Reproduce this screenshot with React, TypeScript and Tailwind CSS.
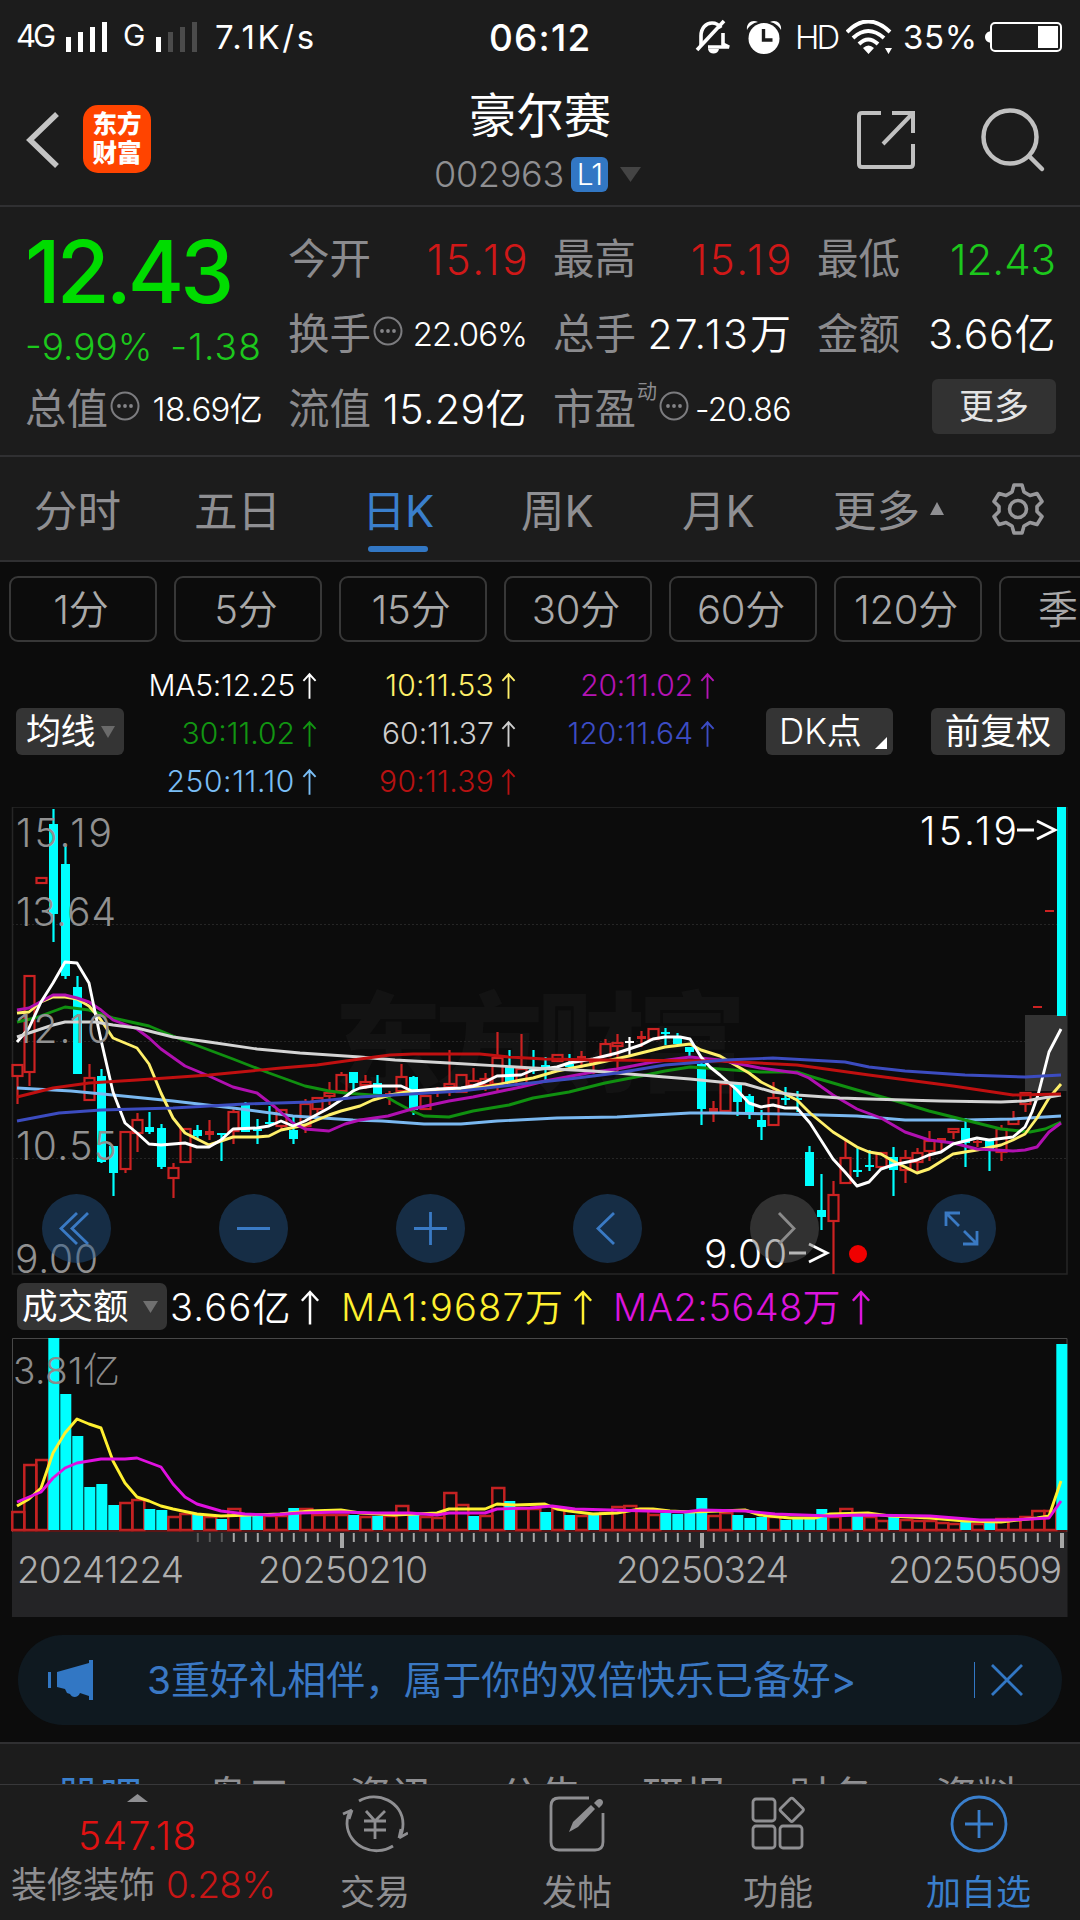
import { clsx } from 'clsx';
import type { ReactNode } from 'react';

type Tone = 'up' | 'down' | 'flat';

// tone, high, body top, body bottom, low
type Candle = [Tone, number, number, number, number];

const CANDLES: Candle[] = [
  ['up', 257, 257, 270, 297], ['up', 168, 168, 266, 279], ['up', 70, 70, 77, 77], ['down', 2, 17, 107, 135],
  ['down', 39, 57, 169, 172], ['down', 169, 180, 267, 267], ['up', 257, 270, 294, 294], ['down', 262, 269, 355, 356],
  ['down', 339, 339, 366, 389], ['up', 324, 324, 363, 366], ['up', 306, 312, 327, 345], ['down', 305, 320, 325, 327],
  ['down', 317, 321, 360, 362], ['up', 356, 360, 372, 391], ['up', 321, 321, 356, 356], ['down', 318, 323, 329, 332],
  ['up', 313, 324, 328, 333], ['down', 326, 326, 328, 354], ['up', 300, 304, 325, 337], ['down', 295, 297, 325, 325],
  ['down', 312, 322, 324, 337], ['down', 299, 315, 317, 318], ['up', 302, 302, 320, 323], ['down', 310, 323, 332, 337],
  ['up', 292, 296, 320, 326], ['up', 290, 290, 303, 308], ['up', 275, 285, 290, 298], ['up', 265, 267, 285, 285],
  ['down', 265, 265, 276, 285], ['up', 268, 274, 279, 282], ['down', 268, 276, 287, 287], ['up', 284, 286, 288, 298],
  ['up', 257, 269, 285, 285], ['down', 269, 270, 303, 308], ['up', 288, 288, 303, 303], ['up', 280, 282, 284, 290],
  ['up', 243, 276, 281, 289], ['up', 267, 267, 286, 286], ['up', 261, 273, 279, 279], ['up', 266, 271, 279, 284],
  ['up', 225, 250, 278, 286], ['down', 243, 259, 276, 276], ['up', 227, 261, 278, 278], ['down', 243, 261, 263, 267],
  ['down', 250, 258, 260, 274], ['up', 247, 247, 255, 255], ['down', 247, 257, 260, 261], ['up', 244, 249, 252, 261],
  ['up', 253, 253, 256, 267], ['up', 232, 236, 250, 250], ['up', 227, 235, 240, 266], ['flat', 230, 234, 236, 249],
  ['up', 224, 229, 232, 240], ['up', 221, 221, 233, 233], ['down', 221, 225, 227, 238], ['down', 226, 229, 237, 237],
  ['down', 240, 240, 245, 249], ['down', 255, 257, 302, 318], ['up', 294, 301, 305, 315], ['up', 276, 276, 305, 305],
  ['down', 277, 277, 295, 309], ['down', 287, 289, 306, 312], ['down', 303, 313, 320, 333], ['up', 275, 290, 319, 319],
  ['down', 280, 291, 293, 298], ['down', 284, 291, 293, 305], ['down', 339, 345, 379, 379], ['down', 367, 403, 410, 423],
  ['up', 374, 387, 415, 467], ['up', 333, 350, 377, 377], ['down', 340, 363, 365, 370], ['down', 343, 358, 360, 364],
  ['up', 345, 345, 361, 361], ['down', 340, 350, 363, 389], ['up', 343, 350, 364, 376], ['up', 341, 345, 356, 364],
  ['up', 324, 333, 345, 354], ['up', 331, 331, 335, 345], ['up', 321, 321, 326, 332], ['down', 311, 321, 336, 360],
  ['up', 333, 334, 336, 340], ['down', 334, 334, 343, 364], ['up', 318, 321, 346, 354], ['up', 304, 311, 318, 318],
  ['up', 285, 285, 298, 305], ['up', 199, 199, 201, 201], ['up', 103, 103, 105, 105], ['down', 0, 0, 209, 209],
];

// bar heights, negative on falling days
const VOLUMES = [
  19, 66, 71, -193, -136, -94, -43, -46, -25, 28, 31, -21, -20, 14, 17, -16, 14, -11, 22, -15, -15, 15, 15, -22, 22, 16,
  16, 16, -15, 14, -14, 15, 25, -17, 14, 13, 38, 26, -14, 15, 43, -29, 22, 22, -18, 22, -15, 15, -15, 18, 24, 25, 22, 16,
  -17, -16, -18, -32, 15, 18, -15, -12, -13, 14, -10, -12, -13, -21, 14, 22, -14, 14, 10, -14, 11, 10, 10, 8, 7, -9, 7,
  -9, 12, 12, 14, 20, 20, -186,
];

const LINES = [
  { stroke: '#7ab8f0', points: '17,281 71,284 113,288 173,294 233,301 293,309 353,313 382,314 424,317 461,317 497,314 557,311 617,310 690,306 720,306 785,307 857,309 905,313 965,313 1013,312 1061,309' },
  { stroke: '#109010', points: '17,215 35,211 65,200 89,203 113,211 149,219 185,234 233,252 269,266 305,279 329,284 345,286 385,289 397,296 412,304 424,309 449,310 473,304 509,298 533,291 569,285 605,276 641,269 665,264 690,260 720,262 760,265 797,265 809,269 833,276 857,283 893,293 929,304 965,313 1001,322 1030,325 1045,322 1061,315' },
  { stroke: '#fff06a', points: '17,206 29,205 41,195 53,190 65,190 77,192 89,199 101,213 113,231 137,241 149,257 161,286 173,311 185,326 197,332 209,338 221,334 233,330 257,330 269,329 281,323 305,318 329,308 341,304 360,299 373,293 390,288 412,284 437,283 485,280 521,273 533,271 557,264 593,257 629,249 665,240 690,237 701,243 720,249 730,255 749,266 761,275 785,287 797,293 810,306 833,325 857,340 869,345 881,347 893,354 905,360 917,366 929,362 953,347 977,343 1001,338 1013,333 1025,327 1037,311 1049,291 1061,277' },
  { stroke: '#b010b0', points: '17,203 29,201 53,188 65,188 77,191 89,195 101,203 113,213 137,222 149,231 161,242 185,259 209,269 233,280 257,286 275,300 293,316 305,322 329,324 345,317 360,313 388,309 412,302 449,294 473,290 497,285 521,280 545,274 593,265 617,262 653,255 690,250 720,253 760,261 797,266 809,271 833,288 857,302 881,311 905,325 929,333 953,336 977,342 1013,344 1025,343 1037,340 1049,325 1061,316' },
  { stroke: '#fff', points: '17,235 29,221 41,195 53,176 65,155 77,156 89,176 95,205 101,233 113,285 125,316 137,326 149,337 161,338 185,336 197,340 209,340 221,333 233,322 257,321 269,319 281,314 293,319 305,314 329,301 341,293 353,284 360,281 373,279 401,279 412,284 437,282 461,281 473,279 485,275 497,269 521,268 533,263 557,260 569,256 593,252 617,246 629,242 641,238 653,232 665,230 680,230 690,232 701,250 710,260 720,268 737,283 749,296 761,300 773,298 785,301 797,301 810,316 833,352 845,365 857,379 869,375 881,362 893,358 917,353 929,348 941,345 953,337 977,331 989,333 1013,330 1025,320 1032,305 1038,288 1049,245 1061,222' },
  { stroke: '#d4d4d4', points: '17,230 29,226 53,218 65,215 95,215 113,218 137,221 173,230 209,235 257,242 300,246 360,250 395,253 449,256 533,261 593,264 629,267 665,270 690,272 720,275 745,277 773,285 797,288 840,291 869,292 940,294 1001,295 1025,294 1061,288' },
  { stroke: '#c01010', points: '17,290 53,281 89,276 137,273 209,268 281,261 317,258 360,252 390,248 413,247 480,247 509,250 545,252 600,253 720,254 797,258 869,268 953,279 1013,288 1061,287' },
  { stroke: '#3c4cc0', points: '17,314 59,306 101,303 173,301 245,297 310,295 360,290 461,284 521,277 569,272 617,266 665,258 690,256 725,253 773,251 809,253 845,255 869,260 905,264 965,268 1025,270 1061,268' },
];

const VOLUME_LINES = [
  { stroke: '#fff030', points: '17,168 29,161 41,150 53,115 65,95 77,81 89,86 101,90 113,123 125,145 137,159 149,163 161,168 173,171 197,176 221,178 250,177 280,176 310,173 341,172 360,175 395,177 437,175 449,171 485,171 497,166 515,167 545,166 557,171 569,173 593,176 617,175 640,171 653,171 670,173 690,174 720,173 745,172 760,177 790,180 815,180 830,176 868,175 890,178 930,180 965,183 1001,184 1037,180 1049,178 1061,143' },
  { stroke: '#e010e0', points: '17,164 41,154 53,140 65,130 77,125 101,121 125,121 137,120 161,129 173,146 185,159 197,166 221,173 245,176 270,177 300,175 341,174 375,175 410,175 437,177 449,175 485,175 497,171 530,170 552,168 575,171 610,172 685,174 701,172 745,173 775,176 830,178 860,177 930,178 980,182 1010,182 1049,180 1061,163' },
];

const candleX = (i: number) => 17.5 + i * 12;

function Dots() {
  return (
    <svg className="w-[30px] h-[30px] shrink-0" viewBox="0 0 30 30" fill="#858588">
      <circle cx="15" cy="15" r="13.5" fill="none" stroke="#7c7c7f" strokeWidth="2" />
      <circle cx="9" cy="15" r="1.9" />
      <circle cx="15" cy="15" r="1.9" />
      <circle cx="21" cy="15" r="1.9" />
    </svg>
  );
}

function StatusBar() {
  return (
    <div className="flex items-center h-[74px] text-white">
      <span className="ml-[16px] w-[50px] text-[31px] leading-none tracking-[-3px] -mt-1">4G</span>
      <svg className="w-[44px] h-[30px] shrink-0" viewBox="0 0 44 30" fill="#fff">
        <rect x="0" y="15" width="5" height="15" />
        <rect x="12" y="10" width="5" height="20" />
        <rect x="24" y="5" width="5" height="25" />
        <rect x="36" y="0" width="5" height="30" />
      </svg>
      <span className="ml-[13px] w-[33px] text-[30px] leading-none tracking-[-2.5px] -mt-1">G</span>
      <svg className="w-[44px] h-[30px] shrink-0" viewBox="0 0 44 30" fill="#4b4b4b">
        <rect x="0" y="15" width="5" height="15" fill="#fff" />
        <rect x="12" y="10" width="5" height="20" />
        <rect x="24" y="5" width="5" height="25" />
        <rect x="36" y="0" width="5" height="30" />
      </svg>
      <span className="ml-[15px] w-[274px] text-[33px] leading-none tracking-[2.6px]">7.1K/s</span>
      <span className="w-[206px] text-[37px] leading-none font-[450] tracking-[1.2px]">06:12</span>
      <svg className="w-[36px] h-[36px] shrink-0" viewBox="0 0 36 36" fill="none" stroke="#fff">
        <path d="M6 27V17C6 9 11 4 17 4c4 0 7 2 9 5M28 14v11l6 3H13" strokeWidth="3.6" />
        <path d="M2 31 29 2" strokeWidth="3.6" />
        <path d="M13 30h11c-1 6-10 6-11 0z" fill="#fff" stroke="none" />
      </svg>
      <svg className="ml-[15px] w-[36px] h-[36px] shrink-0" viewBox="0 0 36 36" fill="#fff">
        <circle cx="18" cy="19.5" r="15.5" />
        <path d="M1 11C0 4 6 0 12 3 7 4 3 7 1 11zM35 11C36 4 30 0 24 3c5 1 9 4 11 8z" />
        <path d="M17.5 10v11h9" fill="none" stroke="#1c1c1c" strokeWidth="3.4" />
      </svg>
      <span className="ml-[13px] w-[51px] text-[33px] leading-none font-[350] tracking-[-3px]">HD</span>
      <svg className="w-[46px] h-[34px] shrink-0" viewBox="0 0 46 34" fill="none" stroke="#fff" strokeWidth="4">
        <path d="M1 12Q22-9 44 12" />
        <path d="M7 18Q22 4 38 18" />
        <path d="M13 24Q22 15 32 24" />
        <path d="M17 28q5.500-5 11 0l-5.500 6zM39 28h7l-3.500 6z" fill="#fff" stroke="none" />
      </svg>
      <span className="ml-[11px] w-[80px] text-[33px] leading-none tracking-[0.6px]">35%</span>
      <svg className="w-[80px] h-[32px] shrink-0" viewBox="0 0 80 32">
        <path d="M8 10v12C3 21 2 18 2 16s1-5 6-6z" fill="#fff" />
        <rect x="8" y="2" width="70" height="28" rx="4" fill="none" stroke="#fff" strokeWidth="2" />
        <rect x="55" y="5" width="20" height="22" fill="#fff" />
      </svg>
    </div>
  );
}

function Header() {
  return (
    <header className="flex h-[133px] border-b-2 border-[#303032]">
      <svg className="ml-[26px] mt-[38px] w-[34px] h-[56px] shrink-0" viewBox="0 0 34 56" fill="none" stroke="#c4c4c4" strokeWidth="5.500">
        <path d="M31 2 4 28l27 26" />
      </svg>
      <div className="ml-[23px] mt-[31px] w-[68px] h-[68px] shrink-0 rounded-[15px] bg-[#ff4400] text-white text-[24.5px] leading-[29px] font-black text-center pt-[5px]">
        <div>东方</div>
        <div>财富</div>
      </div>
      <div className="ml-[218px] w-[342px] flex flex-col items-center">
        <h1 className="mt-[15px] text-[47.5px] leading-[54px] text-white whitespace-nowrap">豪尔赛</h1>
        <div className="flex items-center h-[36px] mt-[13px] self-start ml-[65px]">
          <span className="w-[137px] text-[36px] leading-none font-light text-[#8f8f92] tracking-[-0.3px]">002963</span>
          <span className="w-[37px] h-[35px] shrink-0 rounded-[6px] bg-[#3277c4] text-white text-[30px] leading-[35px] text-center font-[350] tracking-[-1px]">L1</span>
          <svg className="ml-[12px] w-[21px] h-[15px] shrink-0" viewBox="0 0 21 15" fill="#444">
            <path d="M0 0h21L10.500 15z" />
          </svg>
        </div>
      </div>
      <svg className="ml-[145px] mt-[36px] w-[60px] h-[60px] shrink-0" viewBox="0 0 60 60" fill="none" stroke="#c0c0c0" strokeWidth="4">
        <path d="M25 3H6Q3 3 3 6v48q0 3 3 3h48q3 0 3-3V34" />
        <path d="M36 3h21v20M57 3 27 34" />
      </svg>
      <svg className="ml-[64px] mt-[33px] w-[66px] h-[66px] shrink-0" viewBox="0 0 66 66" fill="none" stroke="#c0c0c0" strokeWidth="4.500" strokeLinecap="round">
        <circle cx="30" cy="30" r="26.500" />
        <path d="m49 49 13 13" />
      </svg>
    </header>
  );
}

function Stat({ label, children, dots, sup }: { label: string; children: ReactNode; dots?: boolean; sup?: string }) {
  return (
    <div className="flex items-center h-[75px] pt-[2px] whitespace-nowrap">
      <span className="text-[41.500px] leading-none text-[#8b8b8e]">{label}</span>
      {sup && <span className="text-[20px] leading-none text-[#8b8b8e] ml-px -mt-9">{sup}</span>}
      {dots && <span className="ml-[2px] -mt-2"><Dots /></span>}
      <span className="ml-auto leading-none">{children}</span>
    </div>
  );
}

function Quote() {
  return (
    <section className="flex gap-[26px] h-[250px] border-b-2 border-[#303032] pl-[25px] pr-[24px] pt-[14px]">
      <div className="w-[237px]">
        <div className="flex items-center h-[101px] text-[86px] font-medium leading-none text-[#00dc00] tracking-[-4px]">12.43</div>
        <div className="flex items-center justify-between h-[49px] text-[37px] font-light leading-none text-[#1cc81c]">
          <span>-9.99%</span>
          <span className="tracking-[1.2px]">-1.38</span>
        </div>
        <Stat label="总值" dots><span className="text-[33px] font-[350] text-white tracking-[-0.7px]">18.69亿</span></Stat>
      </div>
      <div className="w-[239px]">
        <Stat label="今开"><span className="text-[42px] font-light text-[#d01818] tracking-[2.6px] -mr-[3px]">15.19</span></Stat>
        <Stat label="换手" dots><span className="text-[33px] font-[350] text-white tracking-[-1px]">22.06%</span></Stat>
        <Stat label="流值"><span className="text-[41px] font-[350] text-white tracking-[0.4px]">15.29亿</span></Stat>
      </div>
      <div className="w-[238px]">
        <Stat label="最高"><span className="text-[42px] font-light text-[#d01818] tracking-[2.6px] -mr-[3px]">15.19</span></Stat>
        <Stat label="总手"><span className="text-[41px] font-[350] text-white tracking-[2.1px] -mr-[2px]">27.13万</span></Stat>
        <Stat label="市盈" sup="动" dots><span className="text-[32px] font-[350] text-white tracking-[-0.5px]">-20.86</span></Stat>
      </div>
      <div className="w-[239px]">
        <Stat label="最低"><span className="text-[42px] font-light text-[#1cc81c]">12.43</span></Stat>
        <Stat label="金额"><span className="text-[41px] font-[350] text-white tracking-[0.6px]">3.66亿</span></Stat>
        <div className="flex items-center justify-end h-[71px]">
          <button className="w-[124px] h-[55px] rounded-[6px] bg-[#323232] text-[35px] leading-none text-[#e4e4e4]">更多</button>
        </div>
      </div>
    </section>
  );
}

function PeriodTabs() {
  return (
    <nav className="flex h-[105px] border-b-2 border-[#303032] text-[43.5px] leading-none text-[#8f8f92] whitespace-nowrap pt-[33px]">
      <span className="ml-[34px] w-[160px]">分时</span>
      <span className="w-[169px]">五日</span>
      <span className="w-[158px] text-[#3a7fcc]">
        <span className="block -ml-[1px] tracking-[-0.5px]">日K</span>
        <i className="block w-[60px] h-[6px] mt-[12px] ml-[5px] rounded-full bg-[#3277c4]" />
      </span>
      <span className="w-[161px]">周K</span>
      <span className="w-[151px]">月K</span>
      <span>更多</span>
      <svg className="ml-[10px] mt-[12px] w-[14px] h-[13px]" viewBox="0 0 14 13" fill="#8f8f92">
        <path d="M7 0l7 13H0z" />
      </svg>
      <svg className="ml-[48px] -mt-[8px] w-[52px] h-[54px]" viewBox="0 0 52 54" fill="none" stroke="#98989b" strokeWidth="3.600" strokeLinejoin="round">
        <path d="M22 3h8l2 7 6 3.500 7-2 5 8-5 5v5l5 5-5 8-7-2-6 3.500-2 7h-8l-2-7-6-3.500-7 2-5-8 5-5v-5l-5-5 5-8 7 2L20 10z" />
        <circle cx="26" cy="27" r="8.500" />
      </svg>
    </nav>
  );
}

function MinuteButtons() {
  return (
    <div className="flex gap-[17px] pl-[9px] pt-[14px] overflow-hidden">
      {['1分', '5分', '15分', '30分', '60分', '120分', '季'].map((label) => (
        <button
          key={label}
          className={clsx(
            'h-[66px] w-[148px] shrink-0 rounded-[9px] border-2 border-[#383838] pt-[2px] text-[40px] font-[350] leading-none text-[#a9a9a9] tracking-[-0.2px] whitespace-nowrap',
            label === '季' ? 'text-left pl-[37px]' : 'pr-[4px]',
          )}
        >
          {label}
        </button>
      ))}
    </div>
  );
}

function UpArrow({ className }: { className: string }) {
  return (
    <svg className={className} viewBox="0 0 16 28" fill="none" stroke="currentColor" strokeWidth="2">
      <path d="M8 28V2M1.500 9 8 2l6.500 7" />
    </svg>
  );
}

function Ma({ children, className }: { children: string; className: string }) {
  return (
    <div className={clsx('flex items-center justify-end h-[48px] text-[30px] leading-none whitespace-nowrap', className)}>
      {children}
      <UpArrow className="ml-[7px] w-[15px] h-[27px]" />
    </div>
  );
}

function MaBar() {
  return (
    <div className="flex h-[165px] pt-[19px] text-white">
      <button className="flex items-center ml-[16px] mt-[47px] w-[108px] h-[47px] shrink-0 rounded-[6px] bg-[#343434] pl-[10px] text-[35px] leading-none tracking-[-0.5px] whitespace-nowrap">
        均线
        <svg className="ml-[6px] w-[14px] h-[12px]" viewBox="0 0 14 12" fill="#6a6a6a"><path d="M0 0h14L7 12z" /></svg>
      </button>
      <div className="w-[193px] font-light">
        <Ma className="text-white tracking-[-0.2px]">MA5:12.25</Ma>
        <Ma className="text-[#129612]">30:11.02</Ma>
        <Ma className="text-[#7abef5] tracking-[0.6px]">250:11.10</Ma>
      </div>
      <div className="w-[199px] font-light">
        <Ma className="text-[#fff06a] tracking-[0.3px]">10:11.53</Ma>
        <Ma className="text-[#cfcfcf] tracking-[0.1px]">60:11.37</Ma>
        <Ma className="text-[#b81212] tracking-[0.3px]">90:11.39</Ma>
      </div>
      <div className="w-[199px] font-light">
        <Ma className="text-[#b414b4] tracking-[-0.1px]">20:11.02</Ma>
        <Ma className="text-[#3c4cc4]">120:11.64</Ma>
      </div>
      <button className="relative ml-[51px] mt-[47px] w-[127px] h-[47px] shrink-0 rounded-[6px] bg-[#343434] text-left pl-[13px] text-[35px] font-[350] leading-none tracking-[0px] whitespace-nowrap">
        DK点
        <svg className="absolute right-[6px] bottom-[6px] w-[12px] h-[12px]" viewBox="0 0 12 12" fill="#fff"><path d="M12 0v12H0z" /></svg>
      </button>
      <button className="ml-[38px] mt-[47px] w-[134px] h-[47px] shrink-0 rounded-[6px] bg-[#343434] text-[35.5px] leading-none text-center whitespace-nowrap">前复权</button>
    </div>
  );
}

const TONES = { up: '#cc2222', down: '#00ffff', flat: '#ffffff' };

function PriceChart() {
  return (
    <svg className="block w-[1080px] h-[470px] font-light" viewBox="0 0 1080 470" fill="none">
      <text x="334" y="276" fontSize="108" fontWeight="900" textLength="412" fill="#131313">东方财富</text>
      <path d="M12 117.500h1055M12 234.500h1055M12 351.500h1055" stroke="#262626" strokeDasharray="2 2" />
      <rect x="12.500" y="0" width="1054.500" height="467" stroke="#262626" strokeWidth="1.500" />
      <rect x="1025" y="208" width="42" height="76" fill="#333" />
      {CANDLES.map(([tone, high, top, bottom, low], i) => {
        const x = candleX(i);
        const color = TONES[tone];
        const hollow = tone === 'up' && bottom - top > 4;
        return (
          <g key={i} stroke={color} strokeWidth="2.2">
            <path d={`M${x} ${high}V${top}M${x} ${bottom}V${low}`} />
            {hollow ? (
              <rect x={x - 5} y={top + 1} width="10" height={bottom - top - 2} />
            ) : (
              <rect x={x - 4.5} y={top} width="9" height={bottom - top} fill={color} stroke="none" />
            )}
          </g>
        );
      })}
      {LINES.map((line) => (
        <polyline key={line.stroke} points={line.points} stroke={line.stroke} strokeWidth="2.900" strokeLinejoin="round" />
      ))}
      <g fill="#919191" fontSize="39">
        <text x="16" y="40" textLength="96">15.19</text>
        <text x="16" y="119" textLength="100">13.64</text>
        <text x="16" y="236" textLength="95">12.10</text>
        <text x="16" y="353" textLength="101">10.55</text>
        <text x="15" y="466" textLength="83">9.00</text>
      </g>
      <g fill="#fff" fontSize="39" fontWeight="350">
        <text x="920" y="38" textLength="97">15.19</text>
        <text x="704" y="461" textLength="83">9.00</text>
      </g>
      <path d="M1017 23h17M1037 14l18 9-18 9M789 446h17M809 437l18 9-18 9" stroke="#fff" strokeWidth="2.800" />
      <circle cx="858" cy="447" r="9" fill="#f00000" />
      <g fill="#24578c" fillOpacity="0.450">
        <circle cx="76.500" cy="421.500" r="34.500" />
        <circle cx="253.500" cy="421.500" r="34.500" />
        <circle cx="430.500" cy="421.500" r="34.500" />
        <circle cx="607.500" cy="421.500" r="34.500" />
        <circle cx="961.500" cy="421.500" r="34.500" />
        <circle cx="784.500" cy="421.500" r="34.500" fill="#606060" />
      </g>
      <g stroke="#3a7ac4" strokeWidth="2.800">
        <path d="M77 406 61 421.500 77 437M88 406 72 421.500 88 437M237 421.500h33M414 421.500h33M430.500 405v33M614 406l-16 15.500 16 15.500" />
        <path d="M946 419v-13h14M946 406l13 13M977 424v13h-14M977 437l-13-13" />
        <path d="m779 406 15 15.500L779 437" stroke="#8b8b8b" />
      </g>
    </svg>
  );
}

function TurnoverBar() {
  return (
    <div className="flex items-center h-[61px] pb-[2px] text-[38px] leading-none whitespace-nowrap">
      <button className="flex items-center ml-[17px] w-[150px] h-[47px] shrink-0 rounded-[7px] bg-[#343434] pl-[5px] text-[35.500px] text-white">
        成交额
        <svg className="ml-[14px] w-[15px] h-[12px]" viewBox="0 0 15 12" fill="#707070"><path d="M0 0h15L7.500 12z" /></svg>
      </button>
      <span className="flex items-center ml-[3px] w-[170px] text-white font-[350] tracking-[1.2px]">
        3.66亿<UpArrow className="ml-auto mr-[20px] w-[20px] h-[36px]" />
      </span>
      <span className="flex items-center w-[272px] ml-px text-[#fff030] font-[350] tracking-[1.2px]">
        MA1:9687万<UpArrow className="ml-auto mr-[20px] w-[20px] h-[36px]" />
      </span>
      <span className="flex items-center w-[258px] text-[#dc14dc] font-[350] tracking-[0.4px]">
        MA2:5648万<UpArrow className="ml-auto w-[20px] h-[36px]" />
      </span>
    </div>
  );
}

function VolumeChart() {
  return (
    <svg className="block w-[1080px] h-[279px] font-light" viewBox="0 0 1080 279" fill="none">
      <rect x="12" y="194" width="1055.500" height="85" fill="#242426" />
      <path d="M12.500 194V.500h1054.500V194" stroke="#484848" />
      {VOLUMES.map((v, i) => {
        const x = candleX(i) + 0.3;
        return v < 0 ? (
          <rect key={i} x={x - 5.5} y={192 + v} width="11" height={-v} fill="#00ffff" />
        ) : (
          <rect key={i} x={x - 5.5} y={193 - v} width="12" height={v - 1} stroke="#c42222" strokeWidth="2.500" />
        );
      })}
      <path d="M12 193h1055" stroke="#a82020" />
      {VOLUME_LINES.map((line) => (
        <polyline key={line.stroke} points={line.points} stroke={line.stroke} strokeWidth="2.900" strokeLinejoin="round" />
      ))}
      {VOLUMES.map((_, i) => {
        const major = i === 27 || i === 57 || i === 87;
        return i < 15 ? null : (
          <path
            key={i}
            d={`M${candleX(i) + (major ? 0.5 : 0.3)} 195v${major ? 15 : 9}`}
            stroke={i < 18 ? '#5a5a5a' : '#a6a6a6'}
            strokeWidth={major ? 4 : 2}
          />
        );
      })}
      <text x="13" y="46" fontSize="37" textLength="107" fill="#8b8b8b">3.81亿</text>
      <g fill="#aeaeae" fontSize="37">
        <text x="17" y="245" textLength="167">20241224</text>
        <text x="258" y="245" textLength="170">20250210</text>
        <text x="616" y="245" textLength="173">20250324</text>
        <text x="888" y="245" textLength="174">20250509</text>
      </g>
    </svg>
  );
}

function Banner() {
  return (
    <div className="flex items-center mx-[18px] mt-[18px] h-[90px] rounded-full bg-[#0f1920] text-[#3a78c4]">
      <svg className="ml-[30px] w-[46px] h-[42px] shrink-0" viewBox="0 0 46 42" fill="#3277c4">
        <path d="M0 13h3v16H0zM9 13 41 4V1h4v40h-4v-4l-9-3c-2 5-8 5-10 1l-3-1-2-4-8-2z" />
      </svg>
      <span className="ml-[53px] w-[827px] text-[38.800px] leading-none whitespace-nowrap">3重好礼相伴，属于你的双倍快乐已备好&gt;</span>
      <i className="w-px h-[36px] bg-[#3277c4]" />
      <svg className="ml-[15px] w-[34px] h-[34px]" viewBox="0 0 34 34" fill="none" stroke="#3277c4" strokeWidth="2.800">
        <path d="m2 2 30 30M32 2 2 32" />
      </svg>
    </div>
  );
}

function InfoTabs() {
  return (
    <div className="flex mt-[17px] h-[42px] pt-[30px] pl-[58px] border-t-2 border-[#303032] bg-[#1c1c1c] overflow-hidden text-[42px] leading-[46px] text-[#8f8f92] whitespace-nowrap">
      <span className="w-[148px] shrink-0 text-[#3a7fcc]">股吧</span>
      <span className="w-[143px] shrink-0">盘口</span>
      <span className="w-[149px] shrink-0">资讯</span>
      <span className="w-[144px] shrink-0">公告</span>
      <span className="w-[147px] shrink-0">研报</span>
      <span className="w-[146px] shrink-0">财务</span>
      <span className="shrink-0">资料</span>
    </div>
  );
}

function Action({ label, icon, className }: { label: string; icon: ReactNode; className: string }) {
  return (
    <div className={clsx('flex flex-col items-center shrink-0 text-[35px] leading-none whitespace-nowrap', className)}>
      {icon}
      <span className="mt-[21px]">{label}</span>
    </div>
  );
}

function BottomBar() {
  return (
    <footer className="flex h-[137px] border-t border-[#38383a] bg-[#1c1c1c] text-[#8f8f92]">
      <div className="w-[275px] shrink-0">
        <svg className="ml-[127px] mt-[9px] w-[21px] h-[8px]" viewBox="0 0 21 8" fill="#8f8f92"><path d="M10.500 0 21 8H0z" /></svg>
        <div className="mt-[14px] ml-[78px] text-[39px] leading-none font-light text-[#e01212] tracking-[1.4px]">547.18</div>
        <div className="flex items-center mt-[11px] ml-[11px] text-[36px] leading-none whitespace-nowrap">
          装修装饰<span className="ml-[11px] text-[37px] font-light text-[#c81616] tracking-[-0.6px]">0.28%</span>
        </div>
      </div>
      <Action
        className="w-[200px] pt-[9px]"
        label="交易"
        icon={
          <svg className="w-[66px] h-[60px]" viewBox="0 0 66 60" fill="none" stroke="currentColor" strokeWidth="2.800">
            <path d="M17 7C35-4 61 8 61 30c0 5-1 10-4 14M57 44l9-5M57 44l2-9" />
            <path d="M51 52C32 64 6 52 5 30c0-5 1-10 4-14M10 16l-9 4M10 16l-3 9" />
            <path d="m24 17 9 10 10-10M33 27v18M22 27h22M22 36h22" />
          </svg>
        }
      />
      <Action
        className="w-[204px] pt-[9px]"
        label="发帖"
        icon={
          <svg className="w-[56px] h-[60px]" viewBox="0 0 56 60" fill="none" stroke="currentColor" strokeWidth="2.800">
            <path d="M40 4H10Q2 4 2 12v36q0 8 8 8h36q8 0 8-8V19" />
            <path d="M20 38l4-10 18-17 4 4-17 18z" fill="currentColor" stroke="none" />
            <path d="m45 9 3-3q3-2 5 0t0 5l-3 3z" fill="currentColor" stroke="none" />
          </svg>
        }
      />
      <Action
        className="w-[198px] pt-[9px]"
        label="功能"
        icon={
          <svg className="w-[54px] h-[60px]" viewBox="0 0 54 60" fill="none" stroke="currentColor" strokeWidth="2.800">
            <rect x="2" y="5" width="22" height="22" rx="3" />
            <rect x="2" y="32" width="22" height="22" rx="3" />
            <rect x="29" y="32" width="22" height="22" rx="3" />
            <rect x="32" y="7" width="17.500" height="17.500" rx="2" transform="rotate(45 40.750 15.750)" />
          </svg>
        }
      />
      <Action
        className="w-[203px] pt-[9px] text-[#3a7fcc]"
        label="加自选"
        icon={
          <svg className="w-[58px] h-[60px]" viewBox="0 0 58 60" fill="none" stroke="currentColor" strokeWidth="2.800">
            <circle cx="29" cy="30" r="27" />
            <path d="M29 16v28M15 30h28" />
          </svg>
        }
      />
    </footer>
  );
}

export default function App() {
  return (
    <div className="w-[1080px] h-[1920px] overflow-hidden bg-[#0c0c0c] font-['Inter','Noto_Sans_CJK_SC',sans-serif]">
      <div className="bg-[#1c1c1c]">
        <StatusBar />
        <Header />
        <Quote />
        <PeriodTabs />
      </div>
      <MinuteButtons />
      <MaBar />
      <PriceChart />
      <TurnoverBar />
      <VolumeChart />
      <Banner />
      <InfoTabs />
      <BottomBar />
    </div>
  );
}
